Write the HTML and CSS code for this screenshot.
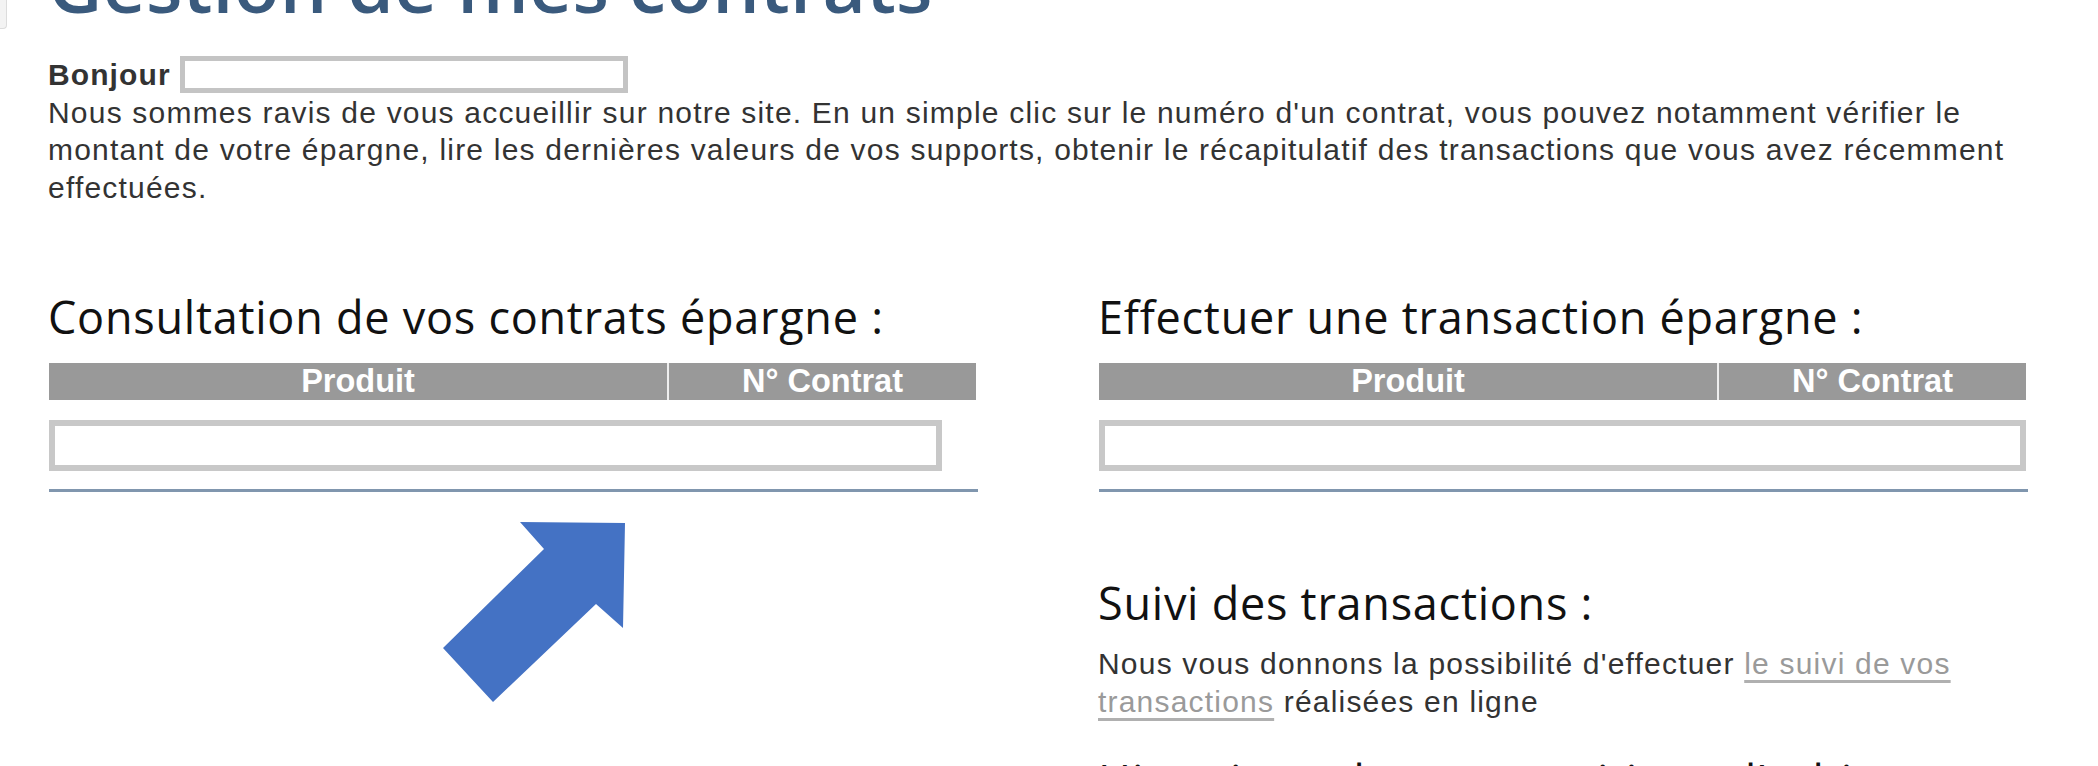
FILE: index.html
```html
<!DOCTYPE html>
<html lang="fr">
<head>
<meta charset="utf-8">
<title>Gestion de mes contrats</title>
<link rel="stylesheet" href="styles.css">
</head>
<body>
<div class="corner"></div>
<div class="page">
  <h1 class="title">Gestion de mes contrats</h1>
  <div class="greeting"><strong>Bonjour</strong> <span class="name-box"></span></div>
  <p class="intro">Nous sommes ravis de vous accueillir sur notre site. En un simple clic sur le numéro d'un contrat, vous pouvez notamment vérifier le montant de votre épargne, lire les dernières valeurs de vos supports, obtenir le récapitulatif des transactions que vous avez récemment effectuées.</p>

  <div class="columns">
    <section class="col col-left">
      <h2 class="section-title">Consultation de vos contrats épargne :</h2>
      <div class="table-head">
        <div class="th">Produit</div>
        <div class="th th-sep">N° Contrat</div>
      </div>
      <div class="empty-box narrow"></div>
      <div class="rule"></div>
      <svg class="arrow" width="182" height="180" viewBox="0 0 182 180" aria-hidden="true">
        <polygon points="77,0 182,1 180,106 153,82 50,180 0,126 101,27" fill="#4472c4"/>
      </svg>
    </section>

    <section class="col col-right">
      <h2 class="section-title">Effectuer une transaction épargne :</h2>
      <div class="table-head">
        <div class="th">Produit</div>
        <div class="th th-sep">N° Contrat</div>
      </div>
      <div class="empty-box wide"></div>
      <div class="rule"></div>

      <h2 class="section-title follow">Suivi des transactions :</h2>
      <p class="text">Nous vous donnons la possibilité d'effectuer <a class="link" href="#">le suivi de vos transactions</a> réalisées en ligne</p>

      <h2 class="section-title next">Historique des compositions d'arbitrage</h2>
    </section>
  </div>
</div>
</body>
</html>
```

FILE: styles.css
```css
html, body {
  margin: 0;
  padding: 0;
  background: #ffffff;
}

body {
  font-family: "Liberation Sans", Arial, sans-serif;
  color: #333333;
  overflow: hidden;
}

.corner {
  position: absolute;
  left: 0;
  top: 0;
  width: 6px;
  height: 28px;
  background: #f3f3f3;
  border-right: 1px solid #dcdcdc;
  border-bottom: 1px solid #dcdcdc;
  border-bottom-right-radius: 4px;
}

.page {
  padding: 0 48px;
}

.title {
  margin: -67px 0 21px 0;
  font-family: "Open Sans", sans-serif;
  font-weight: 600;
  font-size: 75px;
  line-height: 102px;
  color: #3a5a7d;
  letter-spacing: 0.2px;
}

.greeting {
  font-size: 30px;
  letter-spacing: 1.1px;
  line-height: 37.5px;
  height: 37.5px;
}

.greeting strong {
  font-weight: 700;
  color: #333333;
}

.name-box {
  display: inline-block;
  vertical-align: top;
  box-sizing: border-box;
  width: 448px;
  height: 37px;
  border: 5px solid #c4c4c4;
  background: #ffffff;
}

.intro {
  margin: 0;
  font-size: 30px;
  letter-spacing: 1.2px;
  line-height: 37.5px;
}

.columns {
  display: grid;
  grid-template-columns: 930px 930px;
  column-gap: 120px;
  margin-top: 80px;
}

.col {
  position: relative;
}

.section-title {
  margin: 0 0 16px 0;
  font-family: "Open Sans", sans-serif;
  font-weight: 400;
  font-size: 45px;
  line-height: 61px;
  letter-spacing: 0.75px;
  color: #111111;
  white-space: nowrap;
}

.table-head {
  display: grid;
  grid-template-columns: 2fr 1fr;
  height: 37px;
  background: #999999;
  margin-left: 1px;
  margin-right: 2px;
}

.th {
  color: #ffffff;
  font-weight: 700;
  font-size: 32.5px;
  line-height: 37px;
  text-align: center;
}

.th-sep {
  border-left: 2px solid #eeeeee;
}

.empty-box {
  box-sizing: border-box;
  height: 51px;
  margin: 20px 0 0 1px;
  border: 6px solid #c8c8c8;
  background: #ffffff;
}

.empty-box.narrow {
  width: 893px;
}

.empty-box.wide {
  margin-right: 2px;
}

.rule {
  height: 3px;
  margin: 18px 0 0 1px;
  background: #8096ae;
}

.arrow {
  position: absolute;
  left: 395px;
  top: 236px;
  display: block;
}

.section-title.follow {
  margin-top: 80px;
  margin-bottom: 12px;
}

.text {
  margin: 0;
  font-size: 30px;
  letter-spacing: 1.2px;
  line-height: 37.5px;
  color: #333333;
}

.link {
  color: #9a9a9a;
  text-decoration: underline;
  text-decoration-color: #b0b0b0;
  text-decoration-thickness: 3px;
  text-underline-offset: 6px;
}

.section-title.next {
  margin-top: 30px;
}
```
